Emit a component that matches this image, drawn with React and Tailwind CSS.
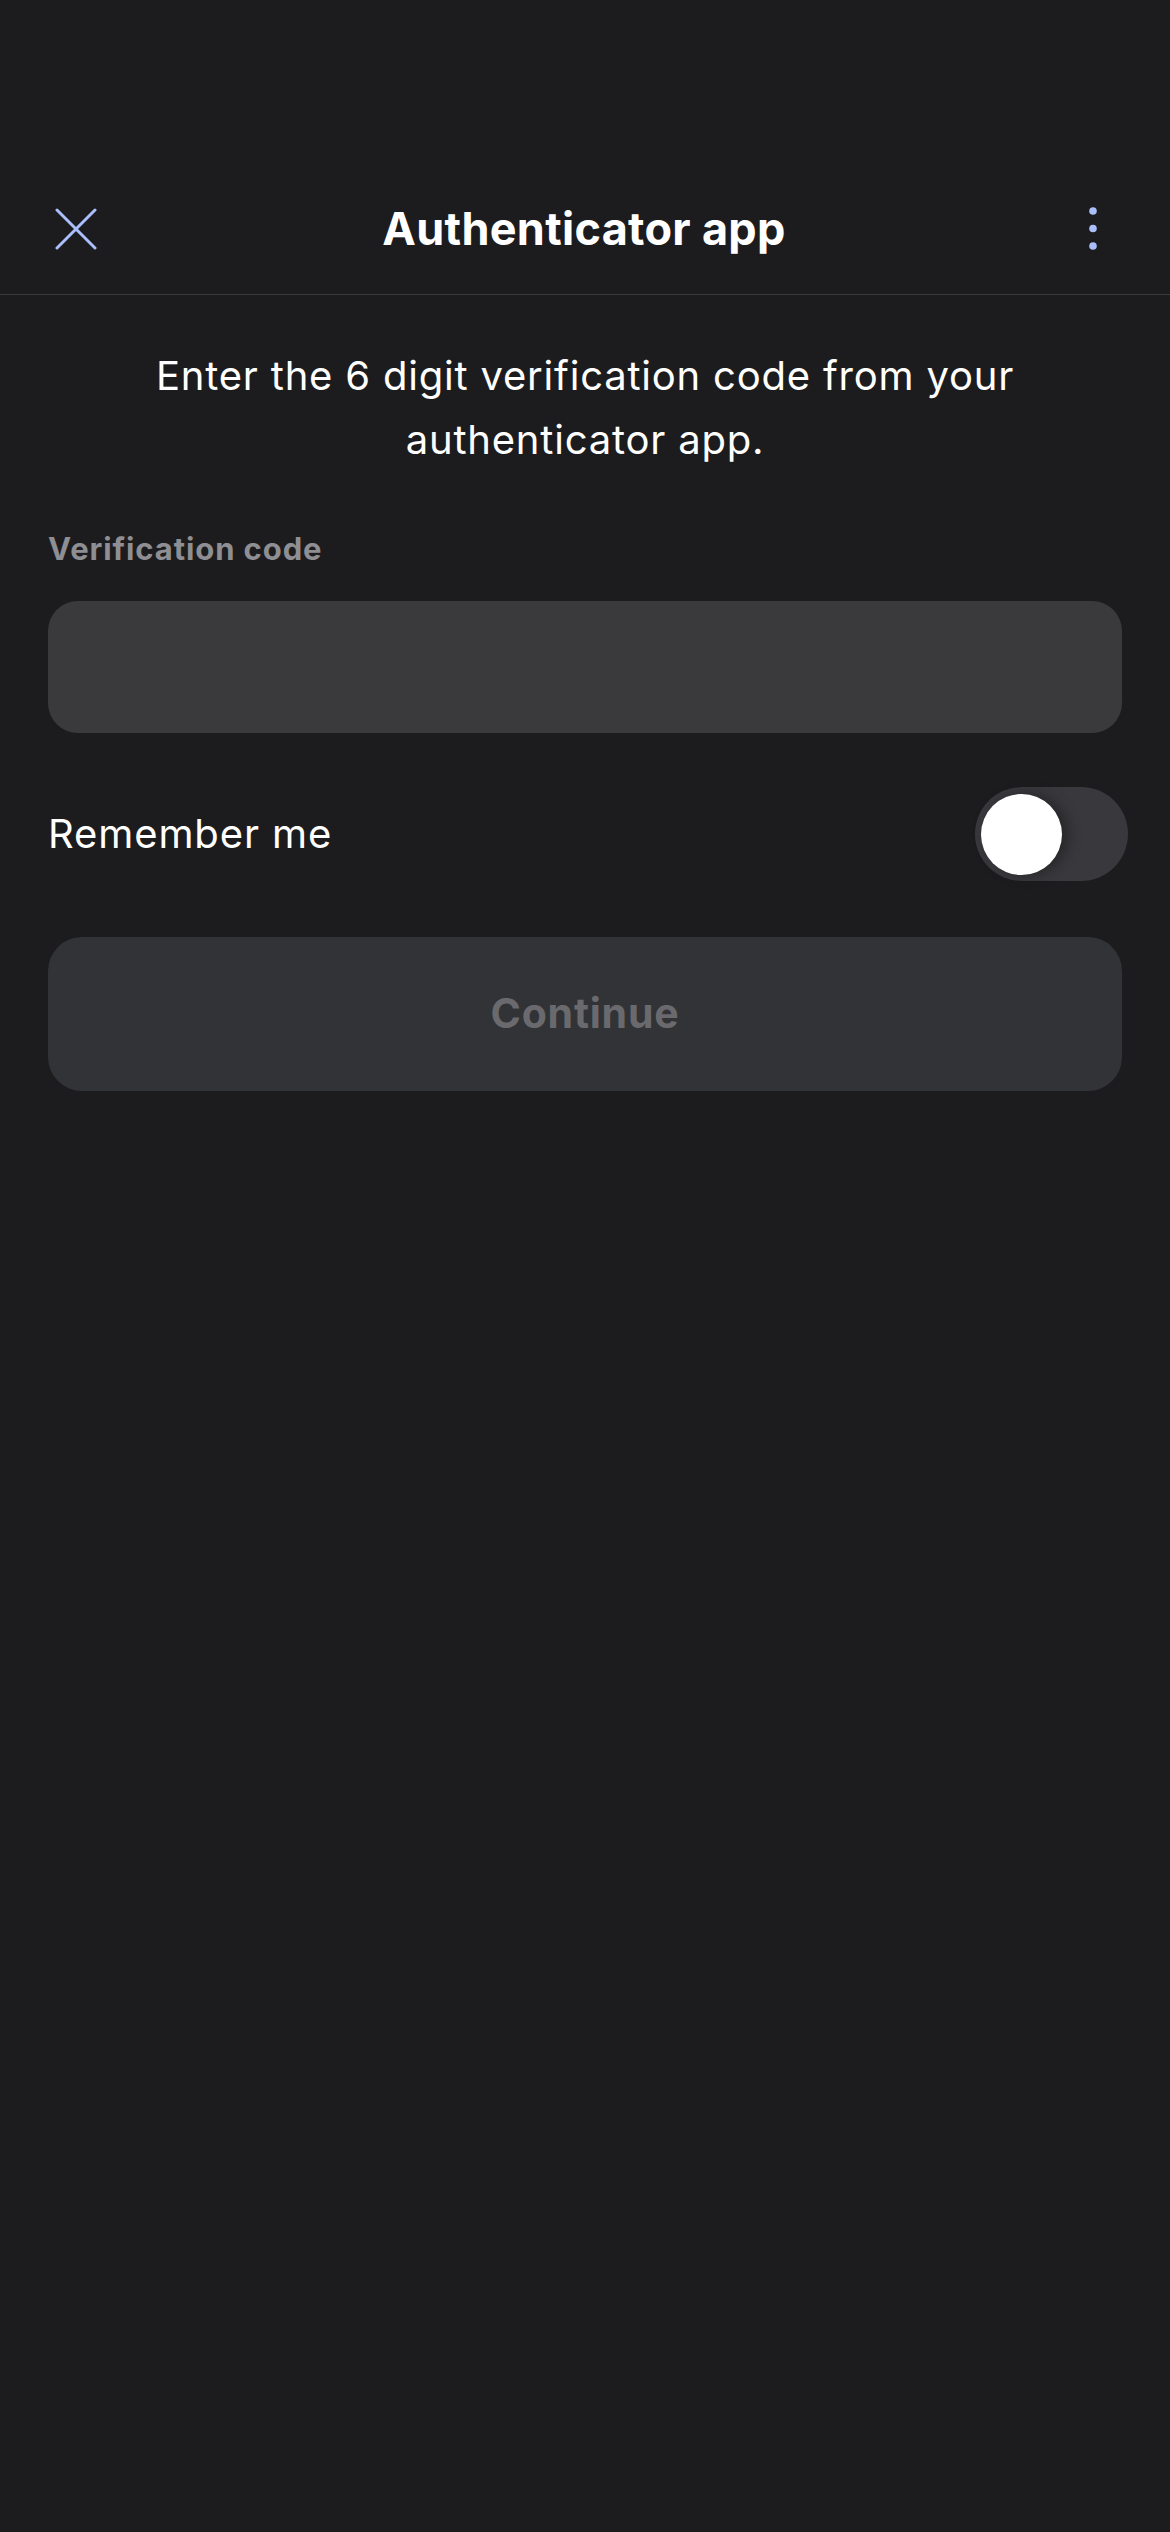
import React, { useState } from 'react';

const CloseIcon = () => (
  <svg width="42" height="42" viewBox="0 0 42 42" fill="none">
    <path d="M2 2L40 40M40 2L2 40" stroke="#a9befa" strokeWidth="3" strokeLinecap="round" />
  </svg>
);

const MoreIcon = () => (
  <svg width="12" height="48" viewBox="0 0 12 48" fill="#a9befa">
    <circle cx="6" cy="6" r="3.8" />
    <circle cx="6" cy="23.5" r="3.8" />
    <circle cx="6" cy="41" r="3.8" />
  </svg>
);

const App = () => {
  const [remember, setRemember] = useState(false);
  const [code, setCode] = useState('');

  return (
    <div className="min-h-screen bg-[#1c1c1e] text-white font-['Inter',sans-serif] pt-[164px]">
      <header className="h-[131px] border-b border-[#3a3a3c] flex items-center justify-between px-[55px]">
        <button className="w-[42px] h-[42px] flex items-center justify-center">
          <CloseIcon />
        </button>
        <h1 className="text-[45px] font-bold tracking-[0.3px]">Authenticator app</h1>
        <button className="w-[44px] h-[48px] flex items-center justify-center">
          <MoreIcon />
        </button>
      </header>

      <div className="px-[48px]">
        <p className="mt-[49px] text-center text-[40px] leading-[64px] tracking-[0.8px] px-[20px]">
          Enter the 6 digit verification code from your authenticator app.
        </p>

        <label className="block mt-[57px] text-[31px] leading-[40px] font-bold tracking-[0.9px] text-[#8e8e93]">
          Verification code
        </label>
        <input
          value={code}
          onChange={(e) => setCode(e.target.value)}
          className="mt-[32px] block w-full h-[132px] rounded-[30px] bg-[#3a3a3c] px-[36px] text-[40px] text-white outline-none"
        />

        <div className="mt-[54px] flex items-center justify-between">
          <span className="text-[40px] tracking-[0.9px]">Remember me</span>
          <button
            onClick={() => setRemember(!remember)}
            className="-mr-[6px] w-[153px] h-[94px] rounded-full bg-[#39393d] p-[6px] flex items-center"
          >
            <span className="w-[81px] h-[81px] rounded-full bg-white shadow-[6px_0_14px_rgba(0,0,0,0.35)]" />
          </button>
        </div>

        <button className="mt-[56px] w-full h-[154px] rounded-[34px] bg-[#323336] text-[41px] font-bold tracking-[0.8px] text-[#6a6a6e]">
          Continue
        </button>
      </div>
    </div>
  );
};

export default App;
